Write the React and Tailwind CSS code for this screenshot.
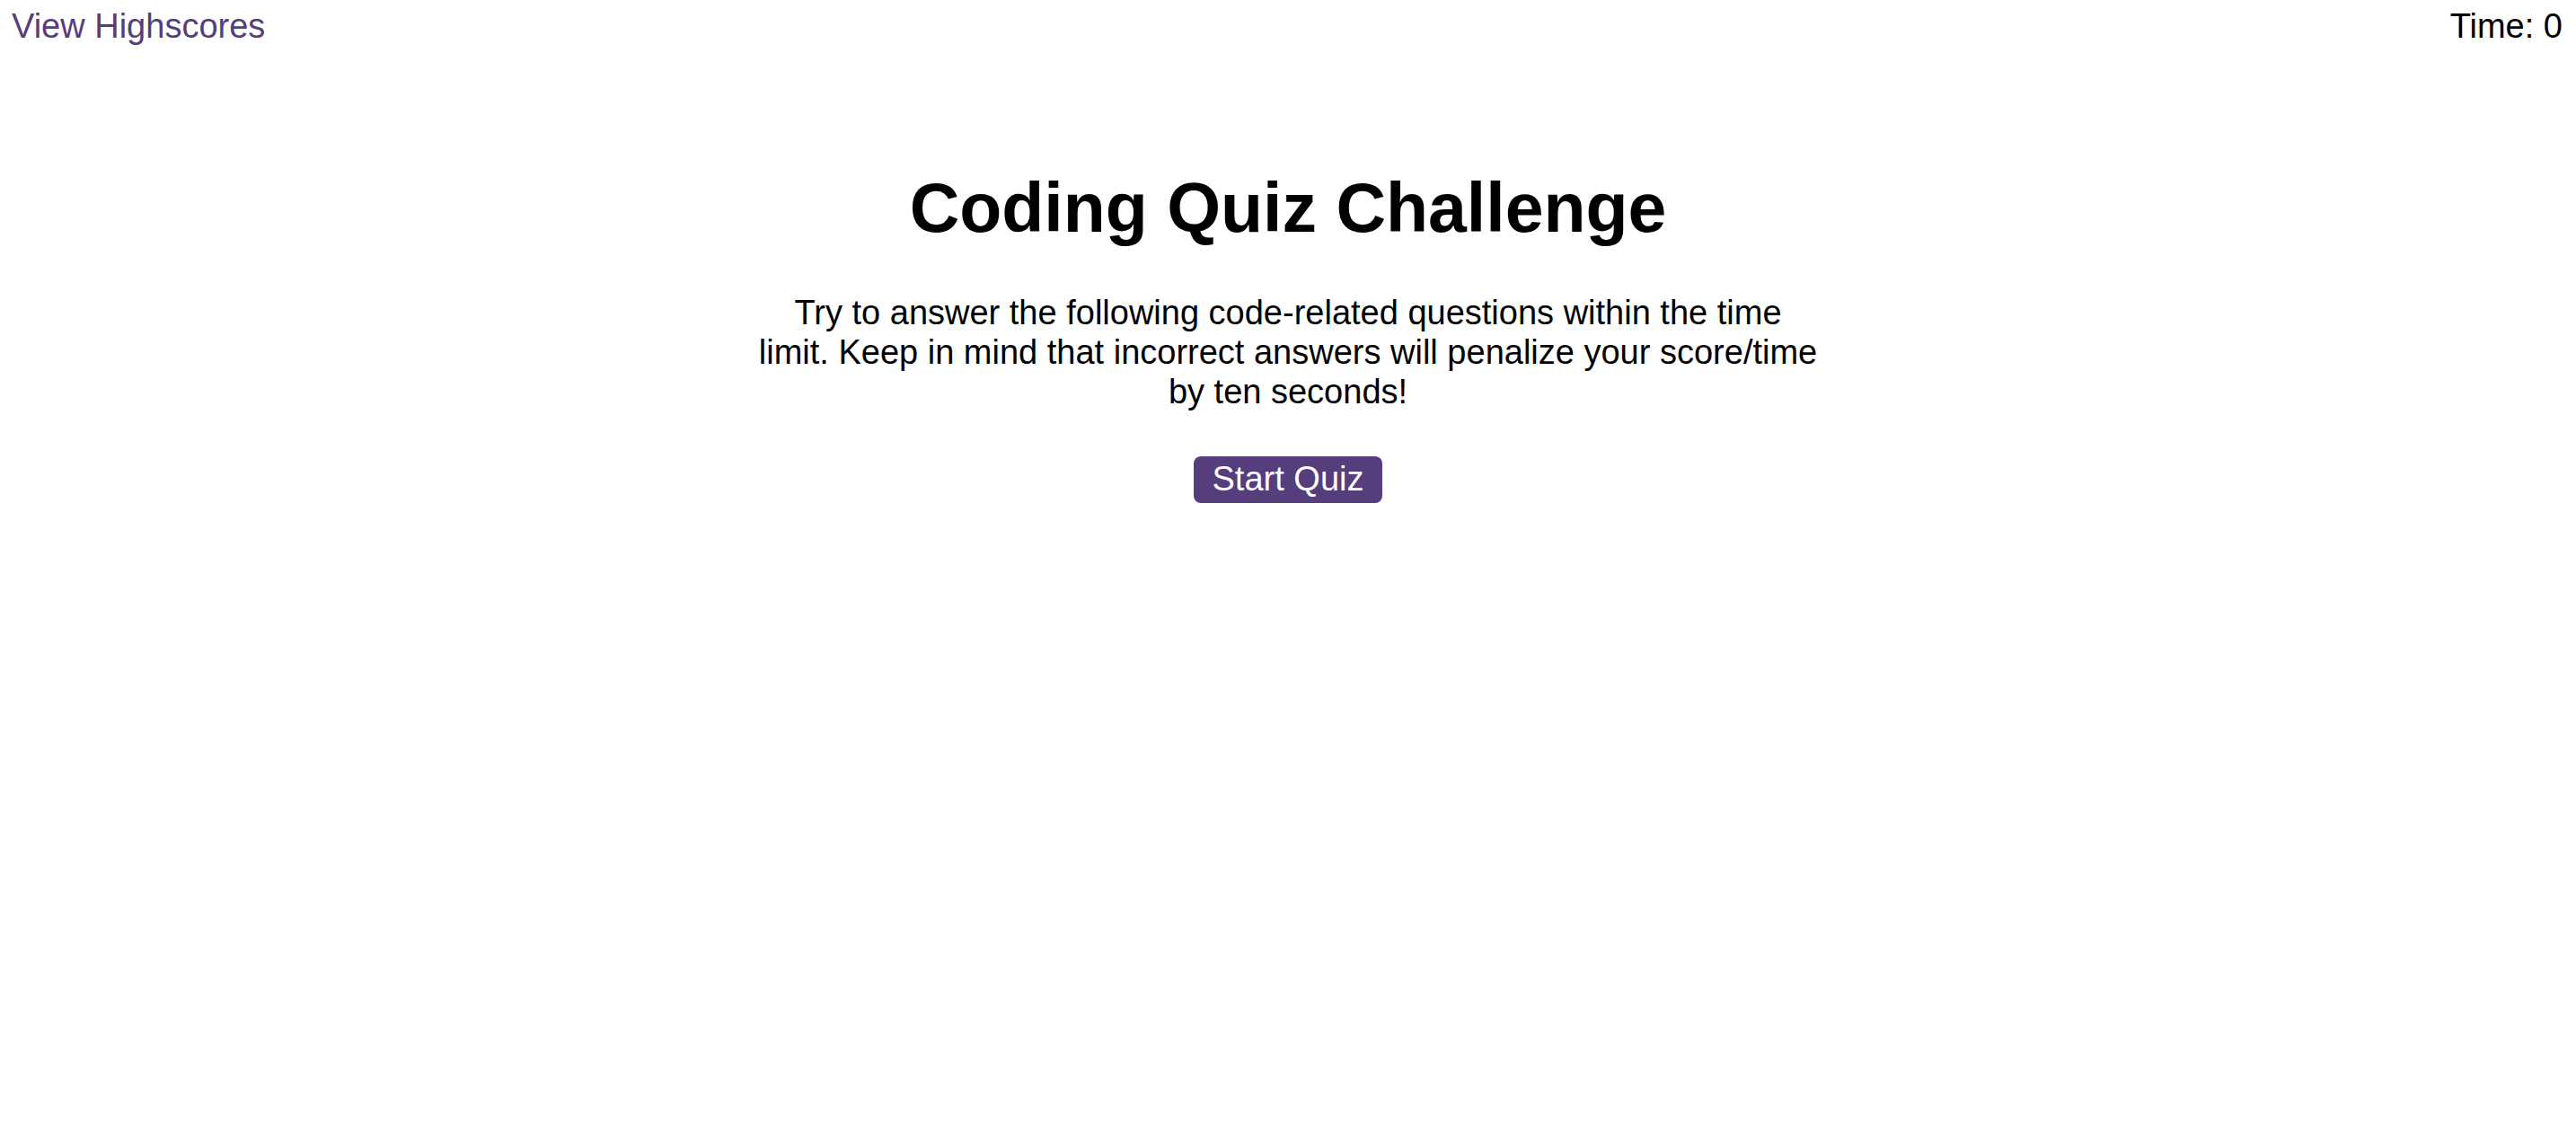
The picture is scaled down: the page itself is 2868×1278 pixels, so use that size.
import React, { useState } from "react";

const App = () => {
  const [time] = useState(0);

  return (
    <div
      className="min-h-screen bg-white text-black"
      style={{ fontFamily: '"Liberation Sans", Arial, sans-serif' }}
    >
      {/* Header */}
      <header className="flex items-start justify-between pt-[8px] pl-[13px] pr-[15px]">
        <a href="#" className="text-[38px] leading-[1.15] text-[#563d7c] no-underline">
          View Highscores
        </a>
        <div className="text-[38px] leading-[1.15]">Time: {time}</div>
      </header>

      {/* Tela inicial */}
      <main className="flex flex-col items-center text-center">
        <h1 className="mt-[135px] text-[77px] leading-[1.15] font-bold">
          Coding Quiz Challenge
        </h1>
        <p className="mt-[52px] w-[1200px] text-[38px] leading-[1.15]">
          Try to answer the following code-related questions within the time
          <br />
          limit. Keep in mind that incorrect answers will penalize your score/time
          <br />
          by ten seconds!
        </p>
        <button className="mt-[50px] rounded-[8px] bg-[#563d7c] px-[21px] py-[4px] text-[38px] leading-[1.15] text-white">
          Start Quiz
        </button>
      </main>
    </div>
  );
};

export default App;
